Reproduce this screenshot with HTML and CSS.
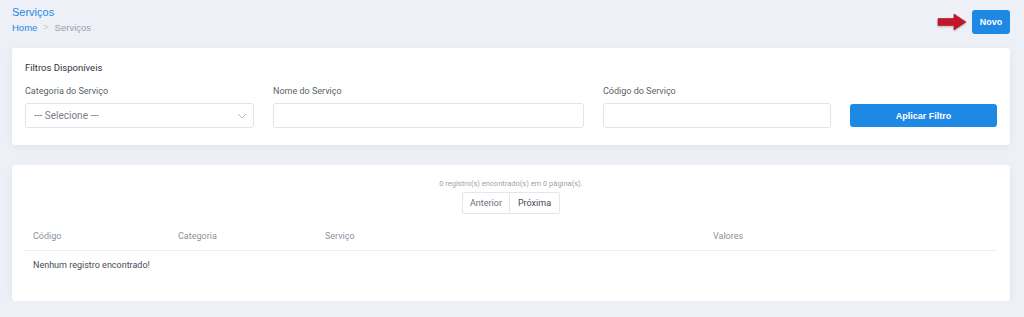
FILE: index.html
```html
<!DOCTYPE html>
<html lang="pt-BR">
<head>
    <meta charset="UTF-8">
    <meta name="viewport" content="width=device-width, initial-scale=1.0">
    <title>Serviços</title>
    <link rel="stylesheet" href="styles.css">
</head>
<body>
<div class="page-header">
    <div>
        <h1 class="page-title">Serviços</h1>
        <div class="breadcrumb">
            <a href="#">Home</a>
            <span class="sep">&gt;</span>
            <span>Serviços</span>
        </div>
    </div>
    <div class="header-actions">
        <svg class="arrow" width="32" height="20" viewBox="0 0 32 20">
            <polygon points="1,6.5 17,6.5 17,2 29,10 17,18 17,13.5 1,13.5" fill="#c4162a" stroke="#a80f20" stroke-width="0.6"/>
        </svg>
        <button class="btn btn-primary btn-novo">Novo</button>
    </div>
</div>

<div class="card filters">
    <h2>Filtros Disponíveis</h2>
    <div class="filter-grid">
        <div class="form-group">
            <label for="categoria">Categoria do Serviço</label>
            <div class="select-wrap">
                <select id="categoria">
                    <option>--- Selecione ---</option>
                </select>
                <svg class="chevron" width="10" height="6" viewBox="0 0 10 6">
                    <polyline points="1,1 5,5 9,1" fill="none" stroke="#b8bec6" stroke-width="1"/>
                </svg>
            </div>
        </div>
        <div class="form-group">
            <label for="nome">Nome do Serviço</label>
            <input type="text" id="nome">
        </div>
        <div class="form-group">
            <label for="codigo">Código do Serviço</label>
            <input type="text" id="codigo">
        </div>
        <div class="form-group">
            <button class="btn btn-primary btn-filter">Aplicar Filtro</button>
        </div>
    </div>
</div>

<div class="card results">
    <div class="counter">0 registro(s) encontrado(s) em 0 página(s).</div>
    <div class="pager">
        <button>Anterior</button>
        <button>Próxima</button>
    </div>
    <table>
        <thead>
            <tr>
                <th class="col-codigo">Código</th>
                <th class="col-categoria">Categoria</th>
                <th class="col-servico">Serviço</th>
                <th>Valores</th>
            </tr>
        </thead>
        <tbody>
            <tr>
                <td colspan="4">Nenhum registro encontrado!</td>
            </tr>
        </tbody>
    </table>
</div>
</body>
</html>
```

FILE: styles.css
```css
body {
    font-family: Roboto, "Liberation Sans", sans-serif;
    background-color: #edf1f7;
    margin: 0;
    padding: 0 14px 0 12px;
    color: #4a4f57;
}

.page-header {
    display: flex;
    justify-content: space-between;
    align-items: flex-start;
    height: 48px;
}

.page-title {
    font-family: "Liberation Sans", Arial, sans-serif;
    font-size: 11px;
    font-weight: normal;
    color: #1e88e5;
    margin: 6px 0 0;
    line-height: 13px;
}

.breadcrumb {
    font-family: "Liberation Sans", Arial, sans-serif;
    font-size: 9.5px;
    margin-top: 3px;
    color: #9aa0a8;
    display: flex;
    gap: 6px;
}

.breadcrumb a {
    color: #1e88e5;
    text-decoration: none;
}

.breadcrumb .sep {
    color: #c7ccd2;
    font-size: 9px;
}

.header-actions {
    display: flex;
    align-items: center;
    gap: 3px;
    margin-top: 10px;
}

.arrow {
    filter: drop-shadow(0 1px 1px rgba(0, 0, 0, 0.25));
}

.btn {
    font-family: "Liberation Sans", Arial, sans-serif;
    border: none;
    border-radius: 3px;
    cursor: pointer;
}

.btn-primary {
    background-color: #1e88e5;
    color: #ffffff;
    font-weight: bold;
}

.btn-novo {
    width: 38px;
    height: 24px;
    font-size: 9px;
    padding: 0;
}

.card {
    background-color: #ffffff;
    border-radius: 3px;
    box-shadow: 0 2px 8px rgba(60, 80, 120, 0.08);
    padding: 13px;
}

.filters {
    height: 71px;
    padding-bottom: 13px;
}

.filters h2 {
    font-size: 9.5px;
    font-weight: normal;
    color: #2f343b;
    margin: 1px 0 0;
    line-height: 12px;
}

.filter-grid {
    display: grid;
    grid-template-columns: 229px 311px 228px 1fr;
    column-gap: 19px;
    align-items: end;
    margin-top: 11px;
}

.form-group label {
    display: block;
    font-size: 9px;
    color: #5a5f67;
    margin-bottom: 6px;
    line-height: 12px;
}

.form-group input,
.form-group select {
    display: block;
    width: 100%;
    height: 25px;
    box-sizing: border-box;
    border: 1px solid #e1e4e8;
    border-radius: 3px;
    background-color: #ffffff;
    font-family: Roboto, "Liberation Sans", sans-serif;
    font-size: 10px;
    color: #7a7f87;
    padding: 0 8px;
    outline: none;
}

.select-wrap {
    position: relative;
}

.select-wrap select {
    appearance: none;
    -webkit-appearance: none;
}

.chevron {
    position: absolute;
    right: 7px;
    top: 10px;
}

.btn-filter {
    width: 100%;
    height: 23px;
    font-size: 9px;
    margin-bottom: 1px;
}

.results {
    margin-top: 20px;
    height: 110px;
}

.counter {
    text-align: center;
    font-size: 7.5px;
    color: #9ea3aa;
    margin-top: 1px;
    line-height: 10px;
}

.pager {
    display: flex;
    justify-content: center;
    margin-top: 3px;
}

.pager button {
    font-family: Roboto, "Liberation Sans", sans-serif;
    font-size: 9px;
    color: #444950;
    background-color: #ffffff;
    border: 1px solid #e3e6ea;
    height: 22px;
    padding: 0 7px;
    cursor: pointer;
}

.pager button:first-child {
    border-radius: 2px 0 0 2px;
    width: 48px;
    color: #6a6f77;
}

.pager button:last-child {
    border-radius: 0 2px 2px 0;
    border-left: none;
    width: 50px;
}

table {
    width: 100%;
    border-collapse: collapse;
    margin-top: 16px;
    font-size: 9px;
}

th {
    text-align: left;
    font-weight: normal;
    color: #8c929a;
    padding: 0 8px 8px;
    border-bottom: 1px solid #eceef1;
    line-height: 12px;
}

td {
    color: #474c53;
    padding: 8px 8px;
    line-height: 12px;
}

.col-codigo {
    width: 129px;
}

.col-categoria {
    width: 131px;
}

.col-servico {
    width: 372px;
}
```
